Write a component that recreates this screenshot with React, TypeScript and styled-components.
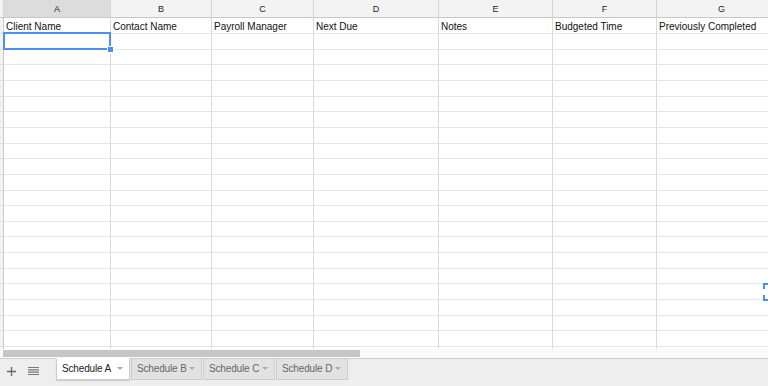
import React from "react";
import styled, { createGlobalStyle } from "styled-components";

const Global = createGlobalStyle`
  html, body { margin: 0; padding: 0; background: #fff; overflow: hidden; }
  body { font-family: "Liberation Sans", Arial, sans-serif; }
  * { box-sizing: border-box; }
`;

const COLS = [4, 107, 101, 102, 125, 114, 104, 130];
const TEMPLATE = COLS.map((w) => `${w}px`).join(" ");
const LETTERS = ["", "A", "B", "C", "D", "E", "F", "G"];
const TITLES = ["", "Client Name", "Contact Name", "Payroll Manager", "Next Due", "Notes", "Budgeted Time", "Previously Completed"];

const Page = styled.div`
  width: 768px;
  height: 386px;
  display: flex;
  flex-direction: column;
  overflow: hidden;
`;

const Sheet = styled.div`
  position: relative;
  flex: 1;
  overflow: hidden;
  background: #fff;
`;

const HeaderRow = styled.div`
  display: grid;
  grid-template-columns: ${TEMPLATE};
  height: 18px;
`;

const ColHead = styled.div<{ $sel?: boolean }>`
  background: ${(p) => (p.$sel ? "#dcdcdc" : "#f3f3f3")};
  border-right: 1px solid #d4d4d4;
  border-bottom: 1px solid #c8c8c8;
  font-size: 9px;
  color: #222;
  display: flex;
  align-items: center;
  justify-content: center;
  padding-top: 1px;
`;

const Row = styled.div<{ $h: number }>`
  display: grid;
  grid-template-columns: ${TEMPLATE};
  height: ${(p) => p.$h}px;
`;

const RowHead = styled.div`
  background: #f3f3f3;
  border-right: 1px solid #c8c8c8;
  border-bottom: 1px solid #e2e2e2;
`;

const Cell = styled.div`
  border-right: 1px solid #dadada;
  border-bottom: 1px solid #e6e6e6;
  font-size: 10px;
  color: #111;
  padding: 1px 2px 0 2px;
  display: flex;
  align-items: center;
  white-space: nowrap;
  overflow: hidden;
`;

const Selection = styled.div`
  position: absolute;
  left: 3px;
  top: 32px;
  width: 108px;
  height: 18px;
  border: 2px solid #4d8ff0;
  pointer-events: none;
`;

const Handle = styled.div`
  position: absolute;
  right: -5px;
  bottom: -5px;
  width: 7px;
  height: 7px;
  background: #4d8ff0;
  border: 1px solid #fff;
`;

const Marquee = styled.div`
  position: absolute;
  left: 763px;
  top: 283px;
  width: 20px;
  height: 18px;
  border: 2px dashed #4d8ff0;
`;

const ScrollTrack = styled.div`
  height: 9px;
  background: #fafafa;
  padding: 1px 0 1px 3px;
`;

const Thumb = styled.div`
  width: 357px;
  height: 7px;
  background: #c6c6c6;
`;

const TabBar = styled.div`
  height: 28px;
  background: #eeeeee;
  border-top: 1px solid #cfcfcf;
  display: flex;
  align-items: flex-start;
`;

const IconBtn = styled.div`
  width: 22px;
  height: 24px;
  display: flex;
  align-items: center;
  justify-content: center;
  color: #666;
`;

const Tabs = styled.div`
  display: flex;
  gap: 1px;
  margin-left: 12px;
  margin-top: -1px;
`;

const Tab = styled.div<{ $active?: boolean; $w: number }>`
  width: ${(p) => p.$w}px;
  height: 22px;
  background: ${(p) => (p.$active ? "#ffffff" : "#e2e2e2")};
  border: 1px solid #cccccc;
  border-top: ${(p) => (p.$active ? "1px solid #fff" : "1px solid #cccccc")};
  box-shadow: ${(p) => (p.$active ? "0 1px 1px rgba(0,0,0,0.12)" : "none")};
  display: flex;
  align-items: center;
  padding-left: 5px;
  padding-bottom: 1px;
  font-size: 10px;
  letter-spacing: -0.15px;
  color: ${(p) => (p.$active ? "#222" : "#666")};
  white-space: nowrap;
`;

const Caret = styled.span`
  flex-shrink: 0;
  margin-left: auto;
  margin-right: 6px;
  width: 0;
  height: 0;
  border-left: 3px solid transparent;
  border-right: 3px solid transparent;
  border-top: 3px solid #aaa;
`;

const TABS = [
  { name: "Schedule A", w: 74, active: true },
  { name: "Schedule B", w: 71 },
  { name: "Schedule C", w: 72 },
  { name: "Schedule D", w: 72 },
];

export default function App() {
  const rows: { h: number; first: boolean }[] = [];
  let prev = 18;
  for (let n = 1; n <= 22; n++) {
    const end = Math.round(34 + (n - 1) * 15.65);
    rows.push({ h: end - prev, first: n === 1 });
    prev = end;
  }
  return (
    <Page>
      <Global />
      <Sheet>
        <HeaderRow>
          {LETTERS.map((l, i) => (
            <ColHead key={i} $sel={i === 1}>
              {l}
            </ColHead>
          ))}
        </HeaderRow>
        {rows.map((r, ri) => (
          <Row key={ri} $h={r.h}>
            <RowHead />
            {COLS.slice(1).map((_, ci) => (
              <Cell key={ci}>{r.first ? TITLES[ci + 1] : ""}</Cell>
            ))}
          </Row>
        ))}
        <Selection>
          <Handle />
        </Selection>
        <Marquee />
      </Sheet>
      <ScrollTrack>
        <Thumb />
      </ScrollTrack>
      <TabBar>
        <IconBtn>
          <svg width="11" height="11" viewBox="0 0 11 11">
            <path d="M5.5 1v9M1 5.5h9" stroke="#666" strokeWidth="1.3" />
          </svg>
        </IconBtn>
        <IconBtn>
          <svg width="11" height="10" viewBox="0 0 11 10">
            <path d="M0 1.5h11M0 3.8h11M0 6.2h11M0 8.5h11" stroke="#777" strokeWidth="1.2" />
          </svg>
        </IconBtn>
        <Tabs>
          {TABS.map((t) => (
            <Tab key={t.name} $active={t.active} $w={t.w}>
              {t.name}
              <Caret />
            </Tab>
          ))}
        </Tabs>
      </TabBar>
    </Page>
  );
}
